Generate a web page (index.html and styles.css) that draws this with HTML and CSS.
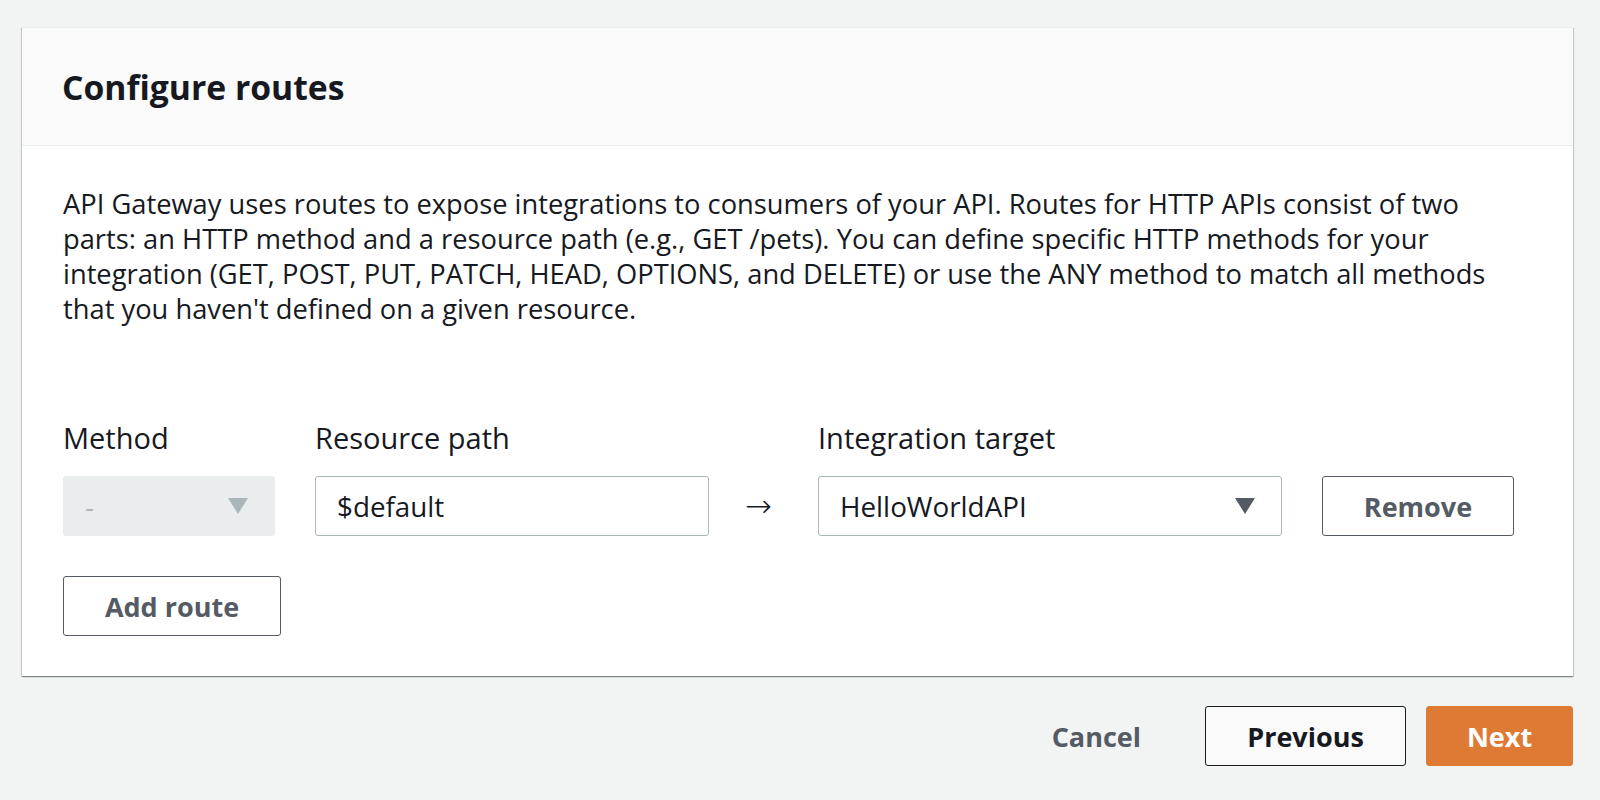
FILE: index.html
```html
<!DOCTYPE html>
<html lang="en">
<head>
<meta charset="utf-8">
<title>Configure routes</title>
<link rel="stylesheet" href="styles.css">
</head>
<body>
<div class="page">
  <section class="card">
    <header class="card-header">
      <h2 class="title">Configure routes</h2>
    </header>
    <div class="card-body">
      <p class="desc">API Gateway uses routes to expose integrations to consumers of your API. Routes for HTTP APIs consist of two parts: an HTTP method and a resource path (e.g., GET /pets). You can define specific HTTP methods for your integration (GET, POST, PUT, PATCH, HEAD, OPTIONS, and DELETE) or use the ANY method to match all methods that you haven't defined on a given resource.</p>
      <div class="route-grid">
        <div class="label">Method</div>
        <div class="label">Resource path</div>
        <div></div>
        <div class="label">Integration target</div>
        <div></div>

        <div class="select disabled">
          <span class="value">-</span>
          <svg class="caret" width="20" height="16" viewBox="0 0 20 16"><polygon points="0,0 20,0 10,16" fill="#aab7b8"/></svg>
        </div>
        <div class="input">$default</div>
        <div class="arrow">→</div>
        <div class="select">
          <span class="value">HelloWorldAPI</span>
          <svg class="caret" width="20" height="16" viewBox="0 0 20 16"><polygon points="0,0 20,0 10,16" fill="#545b64"/></svg>
        </div>
        <button class="btn btn-normal btn-remove">Remove</button>
      </div>
      <button class="btn btn-normal btn-add">Add route</button>
    </div>
  </section>
  <footer class="actions">
    <button class="btn btn-link">Cancel</button>
    <button class="btn btn-prev">Previous</button>
    <button class="btn btn-primary">Next</button>
  </footer>
</div>
</body>
</html>
```

FILE: styles.css
```css
* { box-sizing: border-box; }

html, body {
  margin: 0;
  padding: 0;
  background: #f2f3f3;
}

body {
  font-family: "Open Sans", "Noto Sans", sans-serif;
  color: #16191f;
}

.page {
  padding: 27px 27px 0 22px;
}

.card {
  background: #ffffff;
  border-top: 1px solid #eaeded;
  box-shadow: 0 1px 1px 0 rgba(0, 28, 36, 0.3), 1px 1px 1px 0 rgba(0, 28, 36, 0.15), -1px 1px 1px 0 rgba(0, 28, 36, 0.15);
}

.card-header {
  background: #fafafa;
  border-bottom: 1px solid #eaeded;
  padding: 39px 40px 38px 40px;
}

.title {
  margin: 0;
  font-size: 33.7px;
  line-height: 40px;
  font-weight: 700;
  color: #16191f;
}

.card-body {
  padding: 40px 40px 40px 41px;
}

.desc {
  margin: 0 0 92px 0;
  max-width: 1445px;
  font-size: 27.3px;
  line-height: 35px;
  color: #16191f;
}

.route-grid {
  display: grid;
  grid-template-columns: 212px 394px 29px 464px 192px;
  column-gap: 40px;
  row-gap: 18px;
  align-items: center;
}

.label {
  font-size: 29px;
  line-height: 40px;
  color: #16191f;
}

.input,
.select {
  height: 60px;
  border: 1px solid #aab7b8;
  border-radius: 3px;
  background: #ffffff;
  padding: 0 26px 0 21px;
  display: flex;
  align-items: center;
  justify-content: space-between;
  font-size: 27.8px;
  color: #16191f;
}

.select.disabled {
  background: #eaeded;
  border-color: #eaeded;
  color: #aab7b8;
}

.caret {
  flex: none;
  display: block;
}

.arrow {
  font-family: "DejaVu Sans", sans-serif;
  font-size: 32px;
  font-weight: 300;
  line-height: 60px;
  text-align: center;
  margin-left: -10px;
  color: #16191f;
}

.btn {
  font-family: "Open Sans", "Noto Sans", sans-serif;
  font-weight: 700;
  font-size: 27px;
  height: 60px;
  border-radius: 3px;
  padding: 0;
  cursor: pointer;
  display: inline-flex;
  align-items: center;
  justify-content: center;
}

.btn-normal {
  background: #ffffff;
  border: 1px solid #545b64;
  color: #545b64;
}

.btn-remove {
  width: 192px;
}

.btn-add {
  width: 218px;
  margin-top: 40px;
}

.actions {
  display: flex;
  justify-content: flex-end;
  align-items: center;
  gap: 20px;
  margin-top: 30px;
}

.btn-link {
  background: transparent;
  border: 1px solid transparent;
  color: #545b64;
  padding: 0 43px;
}

.btn-prev {
  width: 201px;
  background: #fafafa;
  border: 1px solid #16191f;
  color: #16191f;
}

.btn-primary {
  width: 147px;
  background: #df7a35;
  border: 1px solid #df7a35;
  color: #ffffff;
}
```
